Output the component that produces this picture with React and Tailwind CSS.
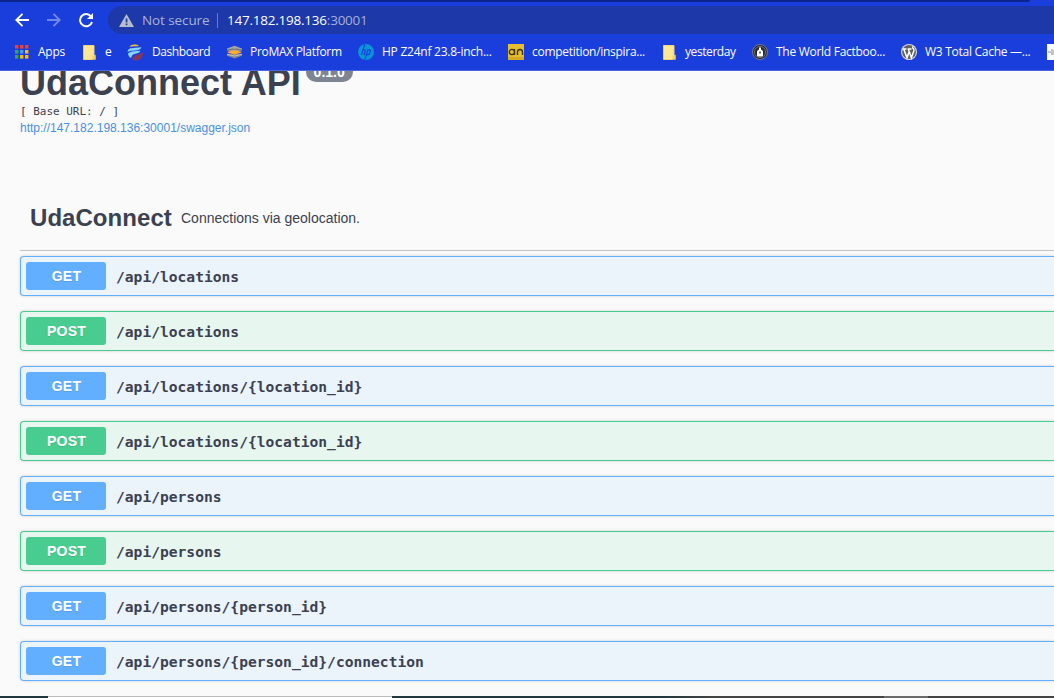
import React from "react";

const endpoints = [
  ["GET", "/api/locations"],
  ["POST", "/api/locations"],
  ["GET", "/api/locations/{location_id}"],
  ["POST", "/api/locations/{location_id}"],
  ["GET", "/api/persons"],
  ["POST", "/api/persons"],
  ["GET", "/api/persons/{person_id}"],
  ["GET", "/api/persons/{person_id}/connection"],
];

function AppsIcon() {
  const colors = ["#ea4335", "#ea4335", "#ea4335", "#34a853", "#4a9af5", "#fbbc05", "#34a853", "#fbbc05", "#fbbc05"];
  return (
    <svg width="14" height="14" className="block">
      {colors.map((c, i) => (
        <rect key={i} x={(i % 3) * 5} y={Math.floor(i / 3) * 5} width="3.4" height="3.6" fill={c} />
      ))}
    </svg>
  );
}

function FolderIcon() {
  return (
    <svg width="13" height="15" className="block">
      <path d="M0.500 0.500h10.500v9l1.500 1v4h-12z" fill="#ffe694" />
      <path d="M0.500 0.500h10.500v9M0.500 0.500v14h9" fill="none" stroke="#f5d46c" />
      <path d="M9.500 14.500V11L12.500 9.500v5z" fill="#f6cf58" />
    </svg>
  );
}

function DashboardIcon() {
  return (
    <svg width="17" height="17" viewBox="0 0 17 17" className="block">
      <path d="M2.500 2.800C4 .3 9 -.5 12 2C9 2.200 6 2.300 2.500 2.800z" fill="#f5c233" />
      <path d="M.5 8C1 5 2.500 4.300 6 4L14.500 3.300C13.500 5.800 11 6.200 8 6.500C5 6.700 2.500 6.800 .5 8z" fill="#83d4ff" />
      <path d="M1 9.500C2.500 7.700 5 7.500 7 7.300L13.500 6.800C12.500 9.300 10 9.500 7.500 10C5 10.500 5 12 4 14C2.300 13 1.200 11.500 1 9.500z" fill="#83d4ff" />
      <path d="M5.500 15.500C5.500 12 8 11 11 10.500C13.500 10 15 9 16.300 8C17 13.500 11 18.500 5.500 15.500z" fill="#84365f" />
    </svg>
  );
}

function StackIcon() {
  return (
    <svg width="17" height="14" viewBox="0 0 17 14" className="block">
      <path d="M1 9L8.500 8L16 9V10.800L8.500 13.500L1 10.800z" fill="#85878a" />
      <path d="M1 3.500L8.500 .7L16 3.500V5.500L8.500 7L1 5.500z" fill="#a4a4a0" />
      <path d="M1.500 6.800L8.500 5.300L15.500 6.800V7.500L8.500 9.500L1.500 7.500z" fill="#ffac2c" />
      <path d="M1 5.200L7 4L8.500 4.600L10 4L16 5.200" fill="none" stroke="#62676b" strokeWidth=".9" />
      <path d="M1 9.300L8.500 11L16 9.300" fill="none" stroke="#d6d0c3" strokeWidth=".8" />
    </svg>
  );
}

function HpIcon() {
  return (
    <svg width="16" height="16" viewBox="0 0 16 16" className="block">
      <circle cx="8" cy="8" r="8" fill="#0894d7" />
      <path d="M6.700 .5L3.300 11M5 5.800H6.400Q7.500 5.800 7.200 7L5.900 11M10 5.300L6.900 15.500M9.800 5.800H11.500Q12.800 5.800 12.400 7L11.600 9.500Q11.200 10.700 10 10.700H8.400" fill="none" stroke="#1a3edc" strokeWidth="1.200" />
    </svg>
  );
}

function AnIcon() {
  return (
    <svg width="16" height="16" viewBox="0 0 16 16" className="block">
      <rect width="16" height="16" fill="#e5bd2e" />
      <rect y="13" width="16" height="3" fill="#d3aa20" />
      <path d="M6.500 5V11M6.500 8A2.600 2.600 0 1 0 1.300 8A2.600 2.600 0 1 0 6.500 8M9.500 11V8Q9.500 5.500 12 5.500T14.500 8V11" fill="none" stroke="#40340f" strokeWidth="1.400" />
    </svg>
  );
}

function FactbookIcon() {
  return (
    <svg width="16" height="16" viewBox="0 0 16 16" className="block">
      <circle cx="8" cy="8" r="7.500" fill="#292a2f" stroke="#777b80" />
      <circle cx="8" cy="8" r="5.600" fill="none" stroke="#999" strokeWidth=".6" />
      <path d="M5 7L7 5.500V3.500h2v2l2 1.500v4.500q0 1-1 1H6q-1 0-1-1z" fill="#fff" />
      <path d="M7.300 7.500h1.500v2H7.300z" fill="#454545" />
    </svg>
  );
}

function WordPressIcon() {
  return (
    <svg width="16" height="16" viewBox="0 0 16 16" className="block">
      <circle cx="8" cy="8" r="8" fill="#dadada" />
      <circle cx="8" cy="8" r="6.900" fill="#61615f" />
      <path d="M1.700 5H5.500M6.600 5H10.500M2.700 5L6 13.800L8.300 7.300M7.300 5L10.400 13.800L12.800 7Q13.300 5.200 11.800 4Q11.500 2.700 12.500 2.600" fill="none" stroke="#fff" strokeWidth="1.500" />
    </svg>
  );
}

const bookmarks = [
  { icon: <AppsIcon />, pad: "w-[23px]", label: "Apps", text: "w-[45px] tracking-[-0.250px]" },
  { icon: <FolderIcon />, pad: "w-[22px]", label: "e", text: "w-[22px]" },
  { icon: <DashboardIcon />, pad: "w-[25px]", label: "Dashboard", text: "w-[74px] tracking-[-0.420px]" },
  { icon: <StackIcon />, pad: "w-[24px]", label: "ProMAX Platform", text: "w-[108px] tracking-[-0.300px]" },
  { icon: <HpIcon />, pad: "w-[24px]", label: "HP Z24nf 23.8-inch...", text: "w-[126px] tracking-[-0.250px]" },
  { icon: <AnIcon />, pad: "w-[24px]", label: "competition/inspira...", text: "w-[131px] tracking-[-0.290px]" },
  { icon: <FolderIcon />, pad: "w-[22px]", label: "yesterday", text: "w-[67px] tracking-[-0.420px]" },
  { icon: <FactbookIcon />, pad: "w-[24px]", label: "The World Factboo...", text: "w-[125px] tracking-[-0.280px]" },
  { icon: <WordPressIcon />, pad: "w-[24px]", label: "W3 Total Cache —...", text: "w-[122px] tracking-[-0.270px]" },
];

function Browser() {
  return (
    <header className="relative z-10 h-[71px] shrink-0 overflow-hidden border-b border-[#4a66e0] bg-[#1a3edc] font-['Open_Sans',sans-serif] whitespace-nowrap text-white">
      <div className="h-[2px] w-[1030px] rounded-br-lg bg-[#0c258e]" />
      <div className="mt-1 flex h-7 items-center">
        <div className="flex w-[108px] shrink-0 items-center pl-[15px]">
          <svg width="14" height="14" viewBox="0 0 14 14" fill="none" stroke="#fff" strokeWidth="1.900"><path d="M14 7H1.500M7.500 .8L1.300 7L7.500 13.200" /></svg>
          <svg className="ml-[18px]" width="14" height="14" viewBox="0 0 14 14" fill="none" stroke="#7188e8" strokeWidth="1.900"><path d="M0 7h12.500M6.500 .8L12.700 7L6.500 13.200" /></svg>
          <svg className="ml-[17px]" width="16" height="16" viewBox="0 0 16 16" fill="none"><path d="M13.200 4.700A6.100 6.100 0 1 0 14 10" stroke="#fff" strokeWidth="2" /><path d="M15 1v6H9z" fill="#fff" /></svg>
        </div>
        <div className="flex h-7 flex-1 items-center rounded-l-full bg-[#1d38a9] pl-[11px] text-[13.500px] leading-5">
          <svg width="15" height="13" viewBox="0 0 15 13" className="shrink-0"><path d="M7.500 0L15 13H0z" fill="#b8bdca" /><path d="M6.700 4.500h1.700v4H6.700zM6.700 9.500h1.700v1.700H6.700z" fill="#1d38a9" /></svg>
          <span className="ml-2 w-[75px] tracking-[-0.100px] text-[#a9b3d5]">Not secure</span>
          <div className="h-[15px] w-px bg-[#6b7dc5]" />
          <span className="ml-[9px] tracking-[-0.230px]">147.182.198.136<span className="text-[#a4afd8]">:30001</span></span>
        </div>
      </div>
      <nav className="flex h-9 items-center pl-[15px] text-[12px] leading-5">
        {bookmarks.map((b) => (
          <div key={b.label} className="flex shrink-0 items-center">
            <div className={"shrink-0 " + b.pad}>{b.icon}</div>
            <span className={"block shrink-0 " + b.text}>{b.label}</span>
          </div>
        ))}
        <div className="flex h-4 w-4 shrink-0 items-center bg-white">
          <svg width="16" height="16"><path d="M1 7h3V5h2v1h10v4H7v1H4V9H1z" fill="#c4c4c4" /></svg>
        </div>
      </nav>
    </header>
  );
}

function Endpoint({ method, path }) {
  const get = method === "GET";
  return (
    <div className={"flex h-10 shrink-0 items-center rounded-l border border-r-0 pl-[5px] shadow-[0_0_3px_rgba(0,0,0,0.19)] " + (get ? "border-[#61affe] bg-[#ebf3fb]" : "border-[#49cc90] bg-[#e8f6f0]")}>
      <div className={"flex h-7 w-20 items-center justify-center rounded-[3px] pl-px text-[14px] leading-5 font-bold text-white [text-shadow:0_1px_0_rgba(0,0,0,0.1)] " + (get ? "bg-[#61affe] tracking-[0.300px]" : "bg-[#49cc90] tracking-[0.200px]")}>
        {method}
      </div>
      <div className="mt-[2px] ml-[10px] font-['DejaVu_Sans_Mono',monospace] text-[14.620px] leading-5 font-bold">{path}</div>
    </div>
  );
}

export default function App() {
  return (
    <div className="flex h-[698px] w-[1054px] flex-col overflow-hidden bg-[#fafafa] font-['Liberation_Sans',sans-serif] text-[#3b4151]">
      <Browser />
      <main className="flex h-[625px] shrink-0 flex-col pl-5">
        <div className="-mt-2 flex h-10 shrink-0 items-start">
          <h1 className="text-[36px] leading-10 font-bold">UdaConnect API</h1>
          <div className="-mt-px ml-[5px] flex h-5 w-[47px] items-center justify-center rounded-full bg-[#7d8492] text-[14px] font-bold text-white">0.1.0</div>
        </div>
        <pre className="h-[17px] shrink-0 font-['DejaVu_Sans_Mono',monospace] text-[10.970px] leading-[18px]">[ Base URL: / ]</pre>
        <a className="h-4 shrink-0 text-[12px] leading-4 text-[#4990e2]">http://147.182.198.136:30001/swagger.json</a>
        <div className="mt-[50px] flex h-[65px] shrink-0 items-center border-b border-[#c1c2c6] pl-[10px]">
          <h2 className="w-[141px] text-[24px] leading-8 font-bold tracking-[0.050px]">UdaConnect</h2>
          <p className="ml-[10px] text-[14px] leading-5">Connections via geolocation.</p>
        </div>
        <div className="mt-[5px] flex flex-col gap-[15px]">
          {endpoints.map(([m, p]) => <Endpoint key={m + p} method={m} path={p} />)}
        </div>
      </main>
      <footer className="flex h-[2px] shrink-0">
        <div className="w-12 bg-[#20373d]" />
        <div className="w-[344px] border-t border-[#bdbdbd] bg-white" />
        <div className="w-[268px] bg-[#20373d]" />
        <div className="w-[60px] bg-linear-to-r from-[#20373d] to-[#444]" />
        <div className="w-[164px] bg-[#444]" />
        <div className="w-[44px] bg-[#6b6b6b]" />
        <div className="flex-1 bg-[#444]" />
      </footer>
    </div>
  );
}
